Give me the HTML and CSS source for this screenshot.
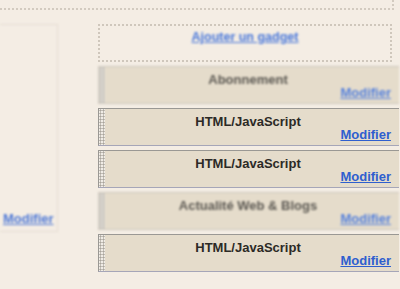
FILE: index.html
```html
<!DOCTYPE html>
<html>
<head>
    <meta charset="utf-8">
    <link rel="stylesheet" href="styles.css">
    <title>Mise en page</title>
</head>
<body>
<div class="top-line"></div>
<div class="layout">
    <div class="sidebar-left soft">
        <a class="edit">Modifier</a>
    </div>
    <div class="sidebar-right">
        <div class="add-gadget"><a class="soft">Ajouter un gadget</a></div>

        <div class="widget soft">
            <div class="grip"></div>
            <div class="widget-body">
                <div class="title faded">Abonnement</div>
                <a class="edit">Modifier</a>
            </div>
        </div>
        <div class="widget">
            <div class="grip"></div>
            <div class="widget-body">
                <div class="title">HTML/JavaScript</div>
                <a class="edit">Modifier</a>
            </div>
        </div>
        <div class="widget">
            <div class="grip"></div>
            <div class="widget-body">
                <div class="title">HTML/JavaScript</div>
                <a class="edit">Modifier</a>
            </div>
        </div>
        <div class="widget soft">
            <div class="grip"></div>
            <div class="widget-body">
                <div class="title faded">Actualité Web &amp; Blogs</div>
                <a class="edit">Modifier</a>
            </div>
        </div>
        <div class="widget">
            <div class="grip"></div>
            <div class="widget-body">
                <div class="title">HTML/JavaScript</div>
                <a class="edit">Modifier</a>
            </div>
        </div>
    </div>
</div>
</body>
</html>
```

FILE: styles.css
```css
body {
    margin: 0;
    background: #f4ede4;
    font-family: "Liberation Sans", Arial, sans-serif;
    overflow: hidden;
}
.top-line {
    width: 392px;
    height: 8px;
    border-bottom: 2px dotted #d3cbc0;
    border-right: 2px dotted #d3cbc0;
    filter: blur(0.5px);
}
.layout {
    display: flex;
    padding-top: 14px;
}
.soft {
    filter: blur(1px);
}
a {
    color: #2f5fcf;
    font-weight: bold;
    text-decoration: underline;
    cursor: pointer;
}
.sidebar-left {
    width: 58px;
    height: 208px;
    border: 1px solid #e6ded3;
    border-left: none;
    display: flex;
    align-items: flex-end;
    box-sizing: border-box;
}
.sidebar-left .edit {
    margin: 0 0 5px 3px;
    font-size: 13px;
    color: #4f79d6;
}
.sidebar-right {
    margin-left: 40px;
    width: 301px;
    display: flex;
    flex-direction: column;
    gap: 4px;
}
.add-gadget {
    width: 294px;
    height: 38px;
    border: 2px dotted #cfc7bc;
    box-sizing: border-box;
    text-align: center;
    padding-top: 4px;
    font-size: 12.5px;
}
.add-gadget a {
    display: inline-block;
    color: #4a78da;
}
.widget {
    display: flex;
    height: 38px;
    box-sizing: border-box;
    background: #e5dccb;
    border-top: 1px solid #9a9894;
    border-left: 1px solid #9a9894;
    border-bottom: 1px solid #a6a6b8;
}
.widget.soft {
    border-color: #cfc8bd;
}
.grip {
    width: 6px;
    background-color: #f0ece6;
    background-image: radial-gradient(circle, #a9a49c 0.9px, transparent 1.2px);
    background-size: 3px 3px;
}
.widget-body {
    flex: 1;
    padding: 5px 8px 0 0;
    font-size: 13px;
}
.title {
    font-weight: bold;
    color: #2c2a26;
    text-align: center;
    line-height: 15px;
}
.title.faded {
    color: #5c5953;
}
.widget .edit {
    display: block;
    width: max-content;
    margin-left: auto;
    line-height: 15px;
    margin-top: -2px;
}
.widget.soft .edit {
    color: #5480dc;
}
```
